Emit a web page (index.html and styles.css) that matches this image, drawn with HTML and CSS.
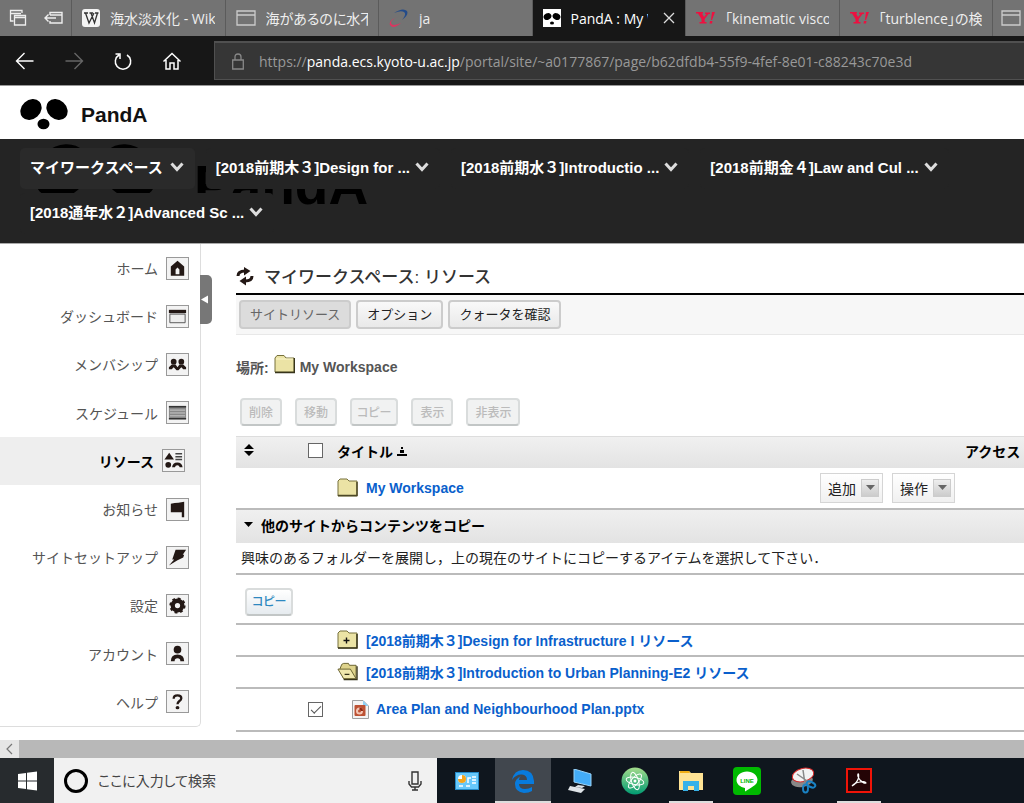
FILE: index.html
```html
<!DOCTYPE html>
<html lang="ja">
<head>
<meta charset="utf-8">
<title>PandA : My Workspace</title>
<link rel="stylesheet" href="styles.css">
</head>
<body>
<div class="tabs">
  <div class="tab-tools">
    <button class="bare" aria-label="表示中のタブ"><svg width="18" height="18" viewBox="0 0 18 18" fill="none" stroke="#eee" stroke-width="1.3"><path d="M4.500 12H1.500V1.500H13V4M1.500 4.500H12M5.500 6.500H16.500V16H5.500ZM5.500 8.500H16.500"/></svg></button>
    <button class="bare" aria-label="タブを保存"><svg width="19" height="18" viewBox="0 0 19 18" fill="none" stroke="#eee" stroke-width="1.400"><path d="M6 6V3.500H18V14H6V12M6 6H18M1 9H12M4.500 5.500L1 9L4.500 12.500"/></svg></button>
  </div>
  <div class="tab"><svg width="18" height="18" viewBox="0 0 18 18"><rect width="18" height="18" rx="3" fill="#f4f4f4"/><path d="M2 4H6M7.500 4H11M13 4H16.500M3.500 4L7 14L12 4M9 4L12.500 14L15.500 4" fill="none" stroke="#333" stroke-width="1.300"/></svg><span>海水淡水化 - Wikipedia</span></div>
  <div class="tab"><svg width="20" height="18" viewBox="0 0 20 18" fill="none" stroke="#ccc" stroke-width="1.300"><path d="M1 2H19V16H1ZM1 6H19"/></svg><span>海があるのに水不足</span></div>
  <div class="tab"><svg width="20" height="20" viewBox="0 0 20 20"><path d="M5 5Q14-1 18 3Q20 7 13 12Q18 6 15 4Q12 2 5 5Z" fill="#234b8a"/><path d="M11 8Q2 11 2 15Q3 19 12 15Q4 22 1 17Q-1 12 11 8Z" fill="#db3560"/></svg><span>ja</span></div>
  <div class="tab active"><svg width="18" height="18" viewBox="0 0 18 18"><rect width="18" height="18" fill="#fff"/><ellipse cx="4.500" cy="7.500" rx="4" ry="3.300" transform="rotate(-25 4.500 7.500)"/><ellipse cx="13.500" cy="7.500" rx="4" ry="3.300" transform="rotate(25 13.500 7.500)"/><ellipse cx="9" cy="14" rx="2" ry="1.500"/></svg><span>PandA : My Workspace</span><button class="bare" aria-label="閉じる"><svg width="12" height="12" viewBox="0 0 12 12"><path d="M1 1L11 11M11 1L1 11" stroke="#ddd" stroke-width="1.300"/></svg></button></div>
  <div class="tab"><svg width="19" height="14" viewBox="0 0 19 14" fill="#ed1040"><path d="M0 1H7V2.500H6L8 6L10.500 3H9V1.500H14V3H12.500L8.700 8V11H10.500V12.500H3.500V11H5.500V8L2 2.500H0ZM16 1H19L16 9H15ZM14 10H16.500L16 12.500H13.500Z"/></svg><span>「kinematic viscosity」</span></div>
  <div class="tab"><svg width="19" height="14" viewBox="0 0 19 14" fill="#ed1040"><path d="M0 1H7V2.500H6L8 6L10.500 3H9V1.500H14V3H12.500L8.700 8V11H10.500V12.500H3.500V11H5.500V8L2 2.500H0ZM16 1H19L16 9H15ZM14 10H16.500L16 12.500H13.500Z"/></svg><span>「turblence」の検索</span></div>
  <div class="tab last"><svg width="20" height="18" viewBox="0 0 20 18" fill="none" stroke="#ccc" stroke-width="1.300"><path d="M1 2H19V16H1ZM1 6H19"/></svg></div>
</div>

<div class="browser-bar">
  <div class="browser-nav">
    <button class="bare" aria-label="戻る"><svg width="20" height="20" viewBox="0 0 20 20" fill="none" stroke="#fff" stroke-width="1.400"><path d="M18.500 10H2M9.500 2L1.500 10L9.500 18"/></svg></button>
    <button class="bare" aria-label="進む"><svg width="20" height="20" viewBox="0 0 20 20" fill="none" stroke="#666" stroke-width="1.400"><path d="M1.500 10H18M10.500 2L18.500 10L10.500 18"/></svg></button>
    <button class="bare" aria-label="更新"><svg width="20" height="20" viewBox="0 0 20 20" fill="none" stroke="#fff" stroke-width="1.500"><path d="M14 4A7.700 7.700 0 1 1 6 4M2.500 3H7V8"/></svg></button>
    <button class="bare" aria-label="ホーム"><svg width="20" height="20" viewBox="0 0 20 20" fill="none" stroke="#fff" stroke-width="1.500"><path d="M1.500 10.500L10 2.500L18.500 10.500M4 9V18H8V12H12V18H16V9"/></svg></button>
  </div>
  <div class="address">
    <svg width="12" height="17" viewBox="0 0 12 17" fill="none" stroke="#888" stroke-width="1.300"><path d="M.7 7H11.300V16H.7ZM3 7V4Q3 1 6 1Q9 1 9 4V7"/></svg>
    <div class="url" role="textbox" aria-label="アドレス" contenteditable="true" spellcheck="false">https://<b>panda.ecs.kyoto-u.ac.jp</b>/portal/site/~a0177867/page/b62dfdb4-55f9-4fef-8e01-c88243c70e3d</div>
  </div>
</div>

<header class="brand">
  <svg width="48" height="31" viewBox="0 0 48 31"><g id="panda"><ellipse cx="11" cy="10.500" rx="11.500" ry="9.500" transform="rotate(-42 11 10.500)"/><ellipse cx="37" cy="10.500" rx="11.500" ry="9.500" transform="rotate(42 37 10.500)"/><ellipse cx="23.500" cy="25" rx="6" ry="5.300"/></g></svg>
  <span class="brand-name">PandA</span>
</header>

<nav class="sites">
  <svg class="ghost" width="400" height="104" viewBox="0 0 400 104" aria-hidden="true"><use href="#panda" transform="translate(33 5) scale(2.600)"/><text x="194" y="65">PandA</text></svg>
  <a href="#" class="site current">マイワークスペース<svg width="14" height="10" viewBox="0 0 14 10"><path d="M1.500 1.500L7 7.500L12.500 1.500"/></svg></a>
  <a href="#" class="site">[2018前期木３]Design for ...<svg width="14" height="10" viewBox="0 0 14 10"><path d="M1.500 1.500L7 7.500L12.500 1.500"/></svg></a>
  <a href="#" class="site">[2018前期水３]Introductio ...<svg width="14" height="10" viewBox="0 0 14 10"><path d="M1.500 1.500L7 7.500L12.500 1.500"/></svg></a>
  <a href="#" class="site">[2018前期金４]Law and Cul ...<svg width="14" height="10" viewBox="0 0 14 10"><path d="M1.500 1.500L7 7.500L12.500 1.500"/></svg></a>
  <a href="#" class="site">[2018通年水２]Advanced Sc ...<svg width="14" height="10" viewBox="0 0 14 10"><path d="M1.500 1.500L7 7.500L12.500 1.500"/></svg></a>
</nav>

<div class="workspace">
  <aside class="side">
    <nav class="tools">
      <a href="#">ホーム<svg class="ic" viewBox="0 0 22 22"><path fill-rule="evenodd" d="M11 3L18 9V18.500H4V9ZM9 12V17H13V12L11 10Z"/></svg></a>
      <a href="#">ダッシュボード<svg class="ic" viewBox="0 0 22 22"><path d="M2 4H20V7.500H2Z"/><path d="M3 8.500H19V17.500H3Z" fill="#eee" stroke="#555"/></svg></a>
      <a href="#">メンバシップ<svg class="ic" viewBox="0 0 22 22"><circle cx="7" cy="8" r="3"/><circle cx="15" cy="8" r="3"/><path d="M2 16V14L5 11H9L11 14L13 11H17L20 14V16H17L15 14L12 17H10L7 14L5 16Z"/></svg></a>
      <a href="#">スケジュール<svg class="ic" viewBox="0 0 22 22"><path d="M2 4H20V18H2Z" fill="#888"/><path d="M2 5H20M2 17.500H20" stroke="#333" stroke-width="1.500"/><path d="M3 8.500H19M3 11.500H19M3 14.500H19" stroke="#ccc"/></svg></a>
      <a href="#" class="on">リソース<svg class="ic" viewBox="0 0 22 22"><path d="M6.500 3L11.500 10H1.500Z"/><circle cx="5.500" cy="15.500" r="3"/><path d="M13 4H20M13 7H20M13 10H20" stroke="#444" stroke-width="1.500"/><path d="M9.500 18Q10 13 15 13Q20 13 20.500 18H17.500Q17 16 15 16Q13 16 12.500 18Z"/></svg></a>
      <a href="#">お知らせ<svg class="ic" viewBox="0 0 22 22"><path d="M4 5Q8 4 12 4L18 3V19H15.500V14H4Z"/></svg></a>
      <a href="#">サイトセットアップ<svg class="ic" viewBox="0 0 22 22"><path d="M9 3H20L16.500 8H18L17 11L11 14L2 19.500L7.500 13H5.500Z"/></svg></a>
      <a href="#">設定<svg class="ic" viewBox="0 0 22 22"><circle cx="11" cy="11" r="5" fill="none" stroke="#231815" stroke-width="4.500"/><circle cx="11" cy="11" r="7.500" fill="none" stroke="#231815" stroke-width="2" stroke-dasharray="3 2.890"/></svg></a>
      <a href="#">アカウント<svg class="ic" viewBox="0 0 22 22"><circle cx="11" cy="7" r="4"/><path d="M4 19Q4 12 11 12Q18 12 18 19H14Q14 16 11 16Q8 16 8 19Z"/></svg></a>
      <a href="#">ヘルプ<svg class="ic" viewBox="0 0 22 22"><path d="M7 8Q7 4.500 11 4.500Q15 4.500 15 7.500Q15 9 13 10.500Q11 12 11 14" fill="none" stroke="#231815" stroke-width="2.400"/><ellipse cx="11" cy="17.500" rx="2" ry="1.700"/></svg></a>
    </nav>
    <button class="collapse" aria-label="メニューを閉じる"><svg width="8" height="9" viewBox="0 0 8 9"><path d="M0 4.500L7 .5V8.500Z" fill="#fff"/></svg></button>
  </aside>

  <main class="content">
    <h1 class="title"><svg width="18" height="20" viewBox="0 0 18 20" fill="none" stroke="#231815" stroke-width="3"><path d="M2 10Q2 5 9 5M16 10Q16 15 9 15"/><path d="M8 1L14.500 5L8 9.500ZM10 10.500L3.500 15L10 19.500Z" fill="#231815" stroke="none"/></svg>マイワークスペース: リソース</h1>
    <div class="toolbar">
      <button class="tb pressed">サイトリソース</button>
      <button class="tb">オプション</button>
      <button class="tb">クォータを確認</button>
    </div>
    <div class="place">場所:<svg width="21" height="20" viewBox="0 0 21 20"><path d="M1 18V4L3 1.500H10L12 4H20V18Z" fill="#ebe3a5" stroke="#77713c"/><path d="M1 18.500H20.500V4" fill="none" stroke="#37341b" stroke-width="1.500"/><path d="M2 5H19" stroke="#fbf6cd"/></svg><span>My Workspace</span></div>
    <div class="actions">
      <button class="act" disabled>削除</button>
      <button class="act" disabled>移動</button>
      <button class="act kana" disabled>コピー</button>
      <button class="act" disabled>表示</button>
      <button class="act" disabled>非表示</button>
    </div>
    <table class="files">
      <colgroup><col class="c-sort"><col class="c-check"><col><col class="c-act"><col class="c-access"></colgroup>
      <thead>
        <tr class="head">
          <th><svg class="sort" width="10" height="12" viewBox="0 0 10 12"><path d="M5 0L10 5H0ZM0 7H10L5 12Z"/></svg></th>
          <th class="check"><input type="checkbox" aria-label="すべて選択"></th>
          <th>タイトル <svg width="10" height="10" viewBox="0 0 10 10"><path d="M4 0H6V2H4ZM3 3H7V6H3ZM0 7H10V9H0Z"/></svg></th>
          <th></th>
          <th class="access">アクセス</th>
        </tr>
      </thead>
      <tbody>
        <tr class="r-root">
          <td></td><td></td>
          <td><a href="#" class="entry"><svg width="21" height="19" viewBox="0 0 21 19"><path d="M1 18V3L3 1H10L12 3H20V18Z" fill="#ebe3a5" stroke="#77713c"/><path d="M1 17.500H20V4" fill="none" stroke="#4c4826" stroke-width="1.500"/></svg>My Workspace</a></td>
          <td colspan="2"><div class="menus"><button class="menu">追加<i><svg width="9" height="5" viewBox="0 0 9 5"><path d="M0 0H9L4.500 5Z"/></svg></i></button><button class="menu">操作<i><svg width="9" height="5" viewBox="0 0 9 5"><path d="M0 0H9L4.500 5Z"/></svg></i></button></div></td>
        </tr>
        <tr class="head section"><th colspan="5"><button class="fold"><svg width="9" height="5" viewBox="0 0 9 5"><path d="M0 0H9L4.500 5Z"/></svg>他のサイトからコンテンツをコピー</button></th></tr>
        <tr class="r-note"><td colspan="5">興味のあるフォルダーを展開し，上の現在のサイトにコピーするアイテムを選択して下さい．</td></tr>
        <tr class="r-copy"><td colspan="5"><button class="act live kana">コピー</button></td></tr>
        <tr class="r-site">
          <td></td><td></td>
          <td colspan="3"><a href="#" class="entry"><svg width="21" height="19" viewBox="0 0 21 19"><path d="M1 18V3L3 1H10L12 3H20V18Z" fill="#ebe3a5" stroke="#77713c"/><path d="M1 18H20V4" fill="none" stroke="#37341b" stroke-width="1.500"/><path d="M6.500 10.500H12.500M9.500 7.500V13.500" stroke="#111" stroke-width="1.400"/></svg>[2018前期木３]Design for Infrastructure I リソース</a></td>
        </tr>
        <tr class="r-site">
          <td></td><td></td>
          <td colspan="3"><a href="#" class="entry"><svg width="21" height="19" viewBox="0 0 22 19"><path d="M3 7L5 2L7 1H12L13 3H20V17H7Z" fill="#ded38c" stroke="#66602d"/><path d="M1 7H14L20 17H7Z" fill="#f0e8ad" stroke="#66602d"/><path d="M7 18H21V4M8 12.500H13" fill="none" stroke="#37341b" stroke-width="1.400"/></svg>[2018前期水３]Introduction to Urban Planning-E2 リソース</a></td>
        </tr>
        <tr class="r-file">
          <td></td>
          <td class="check"><input type="checkbox" checked aria-label="Area Plan and Neighbourhood Plan.pptx"></td>
          <td colspan="3"><a href="#" class="entry file"><svg width="17" height="19" viewBox="0 0 17 19"><path d="M.5.5H11L16.500 6V18.500H.5Z" fill="#f3f3f3" stroke="#a0a0a0"/><path d="M11 .5V6H16.500Z" fill="#8fd0f4"/><rect x="2.500" y="5" width="11" height="11" rx="1" fill="#bd5234"/><circle cx="7.500" cy="11" r="3.500" fill="#f4c7b5"/><path d="M7.500 11V7.500A3.500 3.500 0 0 1 11 11Z" fill="#8e2815"/><circle cx="7.500" cy="11" r="1.500" fill="#bd5234"/></svg>Area Plan and Neighbourhood Plan.pptx</a></td>
        </tr>
      </tbody>
    </table>
  </main>
</div>

<div class="hscroll"><button aria-label="左へスクロール"><svg width="7" height="12" viewBox="0 0 7 12"><path d="M6 1L1 6L6 11" fill="none" stroke="#777" stroke-width="1.200"/></svg></button></div>

<footer class="taskbar">
  <button class="start" aria-label="スタート"><svg width="19" height="20" viewBox="0 0 19 20" fill="#fff"><path d="M0 3L8 2V9.500H0ZM9 1.800L19 .5V9.500H9ZM0 10.500H8V18L0 17ZM9 10.500H19V19.500L9 18.200Z"/></svg></button>
  <div class="search">
    <svg width="26" height="26" viewBox="0 0 26 26"><circle cx="13" cy="13" r="10.500" fill="none" stroke="#000" stroke-width="3"/></svg>
    <input type="text" placeholder="ここに入力して検索" aria-label="検索">
    <button class="bare" aria-label="音声入力"><svg width="14" height="20" viewBox="0 0 14 20" fill="none" stroke="#333" stroke-width="1.400"><path d="M4 1H10V13H4ZM1 10V13L3.500 16H10.500L13 13V10M7 16V19M4 19H10"/></svg></button>
  </div>
  <div class="apps">
    <button aria-label="コントロール パネル"><svg width="24" height="18" viewBox="0 0 24 18"><rect x=".5" y=".5" width="23" height="17" fill="#67c8fa" stroke="#248ac7"/><circle cx="7" cy="7" r="4" fill="#fff"/><path d="M7 7V3A4 4 0 1 1 3 7Z" fill="#f3a51d"/><path d="M13 11V6H16M17 5H21M17 8H21M17 11H21M4 14H8M11 14H15" fill="none" stroke="#fff" stroke-width="1.500"/></svg></button>
    <button class="focus" aria-label="Edge"><svg width="24" height="24" viewBox="0 0 24 24"><path d="M1 11Q3 1 12 1Q22 1 23 12V15H8Q8 20 14 20Q18 20 21 18V22Q18 24 13 24Q4 23 4 15Q4 10 10 7Q8 8 8 11H16Q16 6 11 5.500Q5 5 1 11Z" fill="#087bdc"/></svg></button>
    <button aria-label="リモート"><svg width="25" height="24" viewBox="0 0 25 24"><path d="M7 0L24 5V17L7 13Z" fill="#43acf7" stroke="#9ad3f8"/><path d="M11 16L18 17L15 19L8 18ZM3 17L18 20L14 24L1 21Z" fill="#dfe4e8"/></svg></button>
    <button aria-label="Atom"><svg width="28" height="28" viewBox="0 0 28 28"><defs><linearGradient id="atom" x2="0" y2="1"><stop stop-color="#a4dc8c"/><stop offset="1" stop-color="#009b72"/></linearGradient></defs><circle cx="14" cy="14" r="13.500" fill="url(#atom)"/><g fill="none" stroke="#fff"><ellipse cx="14" cy="14" rx="9" ry="3.500" transform="rotate(12 14 14)"/><ellipse cx="14" cy="14" rx="9" ry="3.500" transform="rotate(72 14 14)"/><ellipse cx="14" cy="14" rx="9" ry="3.500" transform="rotate(132 14 14)"/></g><circle cx="14" cy="14" r="1.500" fill="#fff"/></svg></button>
    <button class="open" aria-label="エクスプローラー"><svg width="25" height="22" viewBox="0 0 25 22"><path d="M0 1H10L12 3H24V20H0Z" fill="#ffe394"/><path d="M1 1H10L11 3H1Z" fill="#f1ae16"/><path d="M4 11H20V21H15V16H9V21H4Z" fill="#37b1e8"/></svg></button>
    <button aria-label="LINE"><svg width="28" height="28" viewBox="0 0 28 28"><rect width="28" height="28" rx="4" fill="#00b900"/><path d="M14 4.500C8 4.500 3.500 8.300 3.500 13C3.500 17 7 20 12 21V24.500Q18 21 22 18Q24.500 15.500 24.500 13C24.500 8.300 20 4.500 14 4.500Z" fill="#fff"/><text x="14" y="15.500" text-anchor="middle" class="line-logo">LINE</text></svg></button>
    <button aria-label="Snipping Tool"><svg width="27" height="27" viewBox="0 0 27 27"><ellipse cx="12" cy="14" rx="11" ry="6" fill="#888" transform="rotate(-10 12 14)"/><ellipse cx="13" cy="8" rx="11" ry="6.500" fill="#f2f2f2" stroke="#d52a2a" transform="rotate(-15 13 8)"/><path d="M13 3L15 17M7 7L20 16" stroke="#888" stroke-width="1.500"/><g fill="none" stroke="#1982c4" stroke-width="2"><ellipse cx="21" cy="17.500" rx="4.500" ry="2.500" transform="rotate(25 21 17.500)"/><ellipse cx="15.500" cy="21.500" rx="2.500" ry="4"/></g></svg></button>
    <button class="open" aria-label="Acrobat"><svg width="26" height="25" viewBox="0 0 26 25"><rect x="1" y="1" width="24" height="23" fill="#240406" stroke="#f01408" stroke-width="2"/><path d="M6 18Q11 15 12.500 10Q13 5 12 6Q11 8 14 12Q18 16 20 15Q20 13 14 14Q8 15 6 18Z" fill="none" stroke="#fff" stroke-width="1.200"/></svg></button>
  </div>
</footer>
</body>
</html>
```
FILE: styles.css
```css
* { box-sizing: border-box; }
body {
  margin: 0;
  min-height: 100vh;
  display: flex;
  flex-direction: column;
  overflow-x: hidden;
  background: #fff;
  color: #222;
  font-family: "Liberation Sans", "Noto Sans CJK JP", sans-serif;
  font-size: 14px;
}
button, input { font: inherit; color: inherit; margin: 0; }
a { text-decoration: none; color: inherit; }
svg { flex: none; display: block; }
.bare { border: 0; background: none; padding: 0; }

/* browser chrome */
.tabs {
  display: flex;
  height: 36px;
  background: #737373;
  color: #eee;
  font-family: "Open Sans", "Noto Sans CJK JP", sans-serif;
  font-feature-settings: "palt";
  overflow: hidden;
}
.tab-tools { display: flex; align-items: center; gap: 17px; width: 72px; padding-left: 9px; border-right: 1px solid #5b5b5b; flex: none; }
.tab {
  flex: 1 1 0;
  min-width: 0;
  display: flex;
  align-items: center;
  gap: 10px;
  padding: 0 10px;
  border-right: 1px solid #5b5b5b;
}
.tab span { flex: 1; overflow: hidden; white-space: nowrap; }
.tab.active { background: #171717; color: #fff; }
.tab.active span { margin-right: 5px; }
.tab.last { flex: 0 0 31px; padding: 0 0 0 8px; border: 0; }
.browser-bar {
  display: flex;
  height: 50px;
  padding-top: 5px;
  background: #171717;
  border-bottom: 1px solid #999;
}
.browser-nav { display: flex; align-items: center; gap: 29px; width: 214px; padding-left: 15px; flex: none; padding-bottom: 4px; }
.address {
  flex: 1;
  display: flex;
  align-items: center;
  gap: 15px;
  height: 39px;
  padding-left: 17px;
  background: #363636;
  border: 1px solid #505050;
  border-top-width: 2px;
  border-right: 0;
  font-family: "Open Sans", sans-serif;
  color: #999;
  white-space: nowrap;
  overflow: hidden;
}
.url b { font-weight: 400; color: #fff; }

/* site header */
.brand { display: flex; align-items: center; gap: 13px; height: 53px; padding: 4px 20px 0; }
.brand-name { font-size: 21px; line-height: 24px; font-weight: 700; color: #111; }
.sites {
  position: relative;
  display: flex;
  flex-wrap: wrap;
  gap: 4px 11px;
  padding: 9px 20px;
  background: #242424;
  border-bottom: 1px solid #aaa;
}
.ghost { position: absolute; left: 0; top: 0; }
.ghost text { font: 700 55px "Liberation Sans", sans-serif; }
.site {
  position: relative;
  display: flex;
  align-items: center;
  gap: 5px;
  height: 41px;
  padding: 0 11px 4px 10px;
  border-radius: 5px;
  background: #242424;
  color: #fff;
  font-size: 15px;
  font-weight: 700;
  white-space: nowrap;
}
.site.current { background: #2a2a2a; gap: 7px; }
.site svg path { fill: none; stroke: #ddd; stroke-width: 3; }

/* tool menu */
.workspace { display: flex; flex: 1; align-items: flex-start; }
.side { position: relative; flex: none; width: 201px; border: solid #ddd; border-width: 0 1px 1px 0; border-radius: 0 0 5px 0; }
.tools { display: grid; grid-auto-rows: 1fr; min-height: 482px; }
.tools a { display: flex; align-items: center; justify-content: flex-end; gap: 8px; padding-right: 11px; color: #555; }
.tools .on { background: #eee; color: #000; font-weight: 700; padding-right: 15px; }
.ic { width: 23px; height: 23px; border: 1px solid #999; background: #f3f3f3; fill: #231815; }
.collapse { position: absolute; left: 200px; top: 31px; width: 12px; height: 49px; padding: 0 0 0 1px; border: 0; border-radius: 0 5px 5px 0; background: #777; }

/* resources */
.content { flex: 1; min-width: 0; padding: 14px 0 0 35px; }
.title {
  display: flex;
  align-items: center;
  gap: 10px;
  height: 37px;
  margin: 0;
  border-bottom: 2px solid #000;
  font-size: 17px;
  font-weight: 500;
  color: #333;
}
.toolbar { display: flex; gap: 5px; padding: 5px 3px; background: #f7f7f7; border-bottom: 1px solid #e8e8e8; }
.tb {
  height: 29px;
  padding: 0 9px 2px;
  border: 2px solid #ccc;
  border-radius: 4px;
  background: linear-gradient(#f9f9f9, #e9e9e9);
  font-size: 13px;
  white-space: nowrap;
}
.tb.pressed { background: #dcdcdc; color: #666; }
.place { display: flex; align-items: center; gap: 5px; height: 63px; font-size: 14px; font-weight: 700; color: #555; }
.place svg { margin-bottom: 6px; }
.actions { display: flex; gap: 13px; padding: 0 4px 10px; }
.act {
  height: 28px;
  padding: 0 7px 2px;
  border: 2px solid #d9dcdc;
  border-bottom-color: #c2c6c6;
  border-radius: 4px;
  background: #f1f2f2;
  color: #bbb;
  font-size: 12px;
  font-weight: 500;
  white-space: nowrap;
}
.act.kana { padding: 0 5px 2px; font-feature-settings: "palt"; }
.act.live { display: block; margin-left: 9px; background: linear-gradient(#fff, #e6ebef); color: #2e88c0; }
.files { width: 100%; table-layout: fixed; border-collapse: collapse; }
.c-sort { width: 63px; }
.c-check { width: 38px; }
.c-act { width: 145px; }
.c-access { width: 59px; }
.files th, .files td { padding: 0; text-align: left; vertical-align: middle; white-space: nowrap; }
.files .check { padding-left: 9px; }
.head { height: 31px; background: linear-gradient(#f0f0f0, #e3e3e3); color: #000; }
.head th { border-top: 1px solid #ddd; padding-bottom: 3px; }
.head th svg { display: inline-block; }
.head .sort { margin-left: 8px; }
.files tbody tr { border-bottom: 2px solid #bbb; }
.files tbody .section { height: 34px; border-bottom: 0; }
.r-root { height: 41px; }
.r-note { height: 31px; }
.files .r-note td { padding: 0 0 2px 5px; }
.r-copy { height: 50px; }
.files .r-copy td { padding: 6px 0 0; }
.r-site { height: 32px; }
.r-file { height: 43px; }
.fold { display: flex; align-items: center; gap: 8px; padding: 0 0 0 8px; border: 0; background: none; }
.entry { display: flex; align-items: center; gap: 8px; height: 24px; color: #0a5fcc; font-weight: 700; }
.entry.file { gap: 7px; padding-left: 15px; }
.menus { display: flex; gap: 9px; }
.menu {
  display: flex;
  align-items: center;
  gap: 5px;
  height: 30px;
  padding: 0 3px 0 7px;
  border: 1px solid #d5d5d5;
  background: linear-gradient(#fff, #f0f0f0);
}
.menu i { display: grid; place-items: center; width: 18px; height: 18px; border: 1px solid #ccc; background: linear-gradient(#eee, #ccc); }
.menu path { fill: #666; }
input[type="checkbox"] {
  appearance: none;
  display: block;
  width: 15px;
  height: 15px;
  border: 1px solid #666;
  background: #fff;
}
input[type="checkbox"]:checked::before {
  content: "";
  display: block;
  width: 9px;
  height: 4px;
  margin: 3px 0 0 2px;
  border: solid #555;
  border-width: 0 0 1px 1px;
  transform: rotate(-45deg);
}

/* scrollbar and taskbar */
.hscroll { display: flex; height: 18px; background: #b8b8b8; }
.hscroll button { display: grid; place-items: center; width: 19px; padding: 0; border: 0; background: #e6e6e6; }
.taskbar { display: flex; height: 45px; background: #0f161e; }
.start { display: grid; place-items: center; width: 54px; border: 0; background: #272b2e; flex: none; }
.search { display: flex; align-items: center; gap: 9px; flex: 0 0 383px; padding: 0 15px 0 9px; background: #f1f1f1; }
.search input { flex: 1; min-width: 0; padding: 0; border: 0; background: none; font-feature-settings: "palt"; }
.search input::placeholder { color: #444; opacity: 1; }
.apps { display: flex; padding-left: 2px; }
.apps button { display: grid; place-items: center; width: 56px; padding: 0; border: 0; background: none; }
.apps .focus { background: #41474e; box-shadow: inset 0 -2px #ddd; }
.apps .open { background: linear-gradient(#ddd, #ddd) center bottom / 44px 2px no-repeat; }
.line-logo { font: 700 6px "Liberation Sans", sans-serif; fill: #00b900; }
```
